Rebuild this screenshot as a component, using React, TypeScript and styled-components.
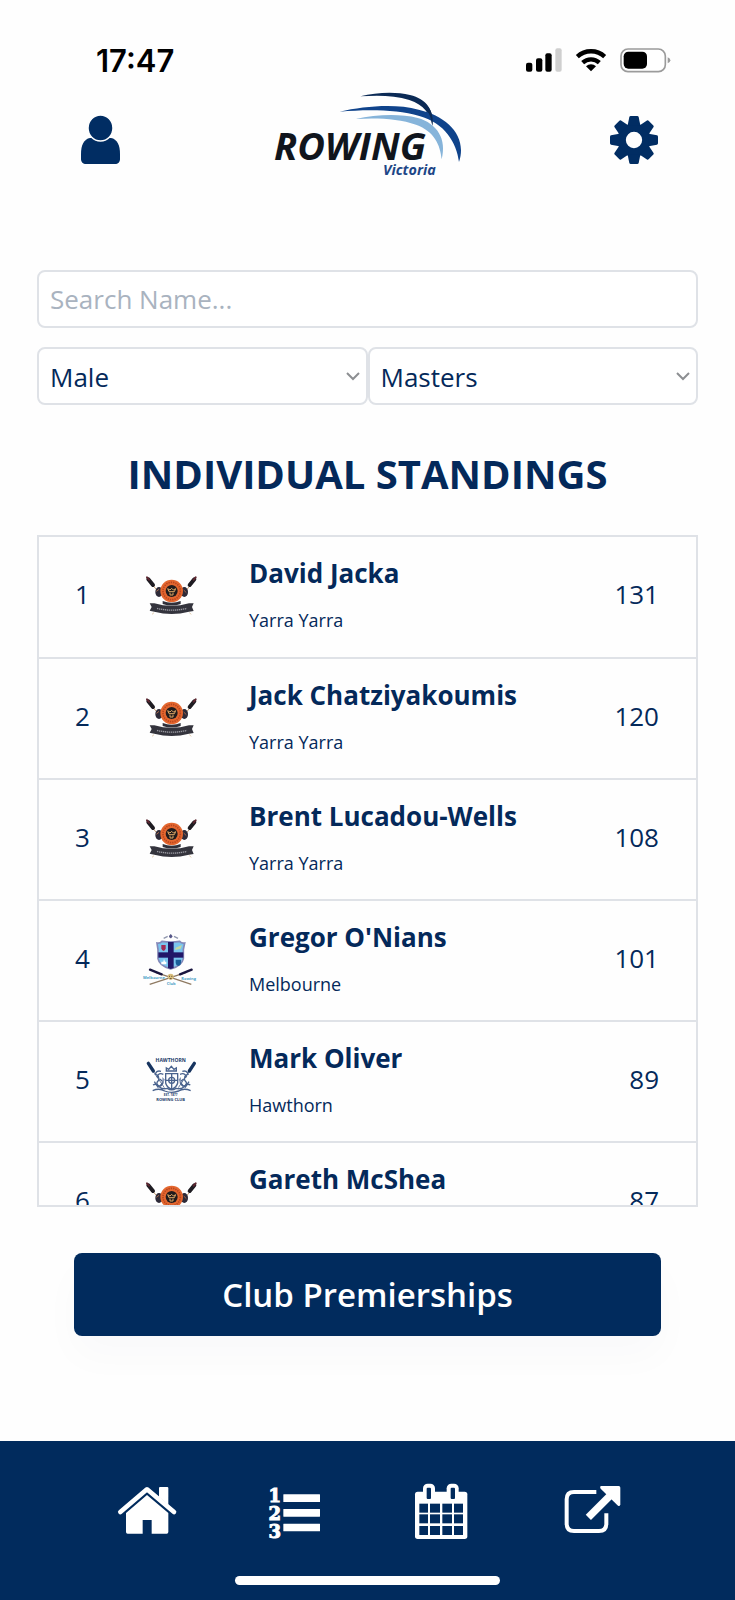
import React, { useState } from "react"
import styled, { createGlobalStyle } from "styled-components"

const navy = "#012b5d"
const textColor = "#04295a"
const borderColor = "#dfe2e7"

const GlobalStyle = createGlobalStyle`
    * {
        box-sizing: border-box;
    }

    body {
        margin: 0;
        background: #fefefe;
        color: ${textColor};
        font-family: "Open Sans", "Noto Sans", sans-serif;
    }
`

const Page = styled.div`
    display: flex;
    flex-direction: column;
    min-height: 100vh;
`

const StatusBar = styled.div`
    display: flex;
    align-items: center;
    justify-content: space-between;
    height: 90px;
    padding: 30px 64px 0 96px;
    color: #000;
`

const Clock = styled.time`
    font-family: Inter, sans-serif;
    font-size: 31px;
    font-weight: 600;
`

const StatusIcons = styled.div`
    display: flex;
    align-items: center;
    gap: 13px;
`

const Header = styled.header`
    display: flex;
    align-items: center;
    justify-content: space-between;
    height: 100px;
    padding: 0 76px;
`

const IconButton = styled.button`
    display: flex;
    padding: 0;
    border: none;
    background: none;
    color: #012d63;
    cursor: pointer;
`

const Main = styled.main`
    display: flex;
    flex-direction: column;
    padding: 80px 37px 0;
`

const SearchInput = styled.input`
    width: 100%;
    height: 58px;
    padding: 0 11px;
    border: 2px solid ${borderColor};
    border-radius: 8px;
    background: #fff;
    color: ${textColor};
    font: inherit;
    font-size: 26px;

    &::placeholder {
        color: #a9b3bf;
        opacity: 1;
    }
`

const Filters = styled.div`
    display: flex;
    margin-top: 19px;
`

const SelectWrapper = styled.div`
    position: relative;
    flex: 1;
`

const Select = styled.select`
    width: 100%;
    height: 58px;
    padding: 2px 40px 0 11px;
    border: 2px solid ${borderColor};
    border-radius: 8px;
    background: #fff;
    color: ${textColor};
    font: inherit;
    font-size: 26px;
    appearance: none;
`

const Chevron = styled.svg`
    position: absolute;
    top: 24px;
    right: 8px;
    pointer-events: none;
`

const Title = styled.h1`
    margin: 41px 0 33px;
    font-size: 40px;
    line-height: 56px;
    font-weight: 700;
    text-align: center;
`

const Standings = styled.div`
    height: 42vh;
    overflow-y: auto;
    border: 2px solid ${borderColor};
    scrollbar-width: none;
`

const Table = styled.table`
    width: 100%;
    border-collapse: collapse;
    table-layout: fixed;
`

const Row = styled.tr`
    height: 121px;
    border-bottom: 2px solid ${borderColor};
`

const Cell = styled.td<{ $width?: number; $align?: string }>`
    width: ${(props) => (props.$width ? `${props.$width}px` : "auto")};
    padding: 0 0 6px;
    font-size: 26px;
    text-align: ${(props) => props.$align || "left"};
    vertical-align: middle;
`

const ScoreCell = styled(Cell)`
    padding-right: 37px;
`

const AthleteCell = styled(Cell)`
    padding-left: 32px;
`

const AthleteName = styled.div`
    font-size: 26px;
    line-height: 36px;
    font-weight: 700;
    white-space: nowrap;
`

const ClubName = styled.div`
    margin-top: 16px;
    font-size: 18px;
    line-height: 26px;
`

const CrestBox = styled.svg`
    display: block;
    margin: 0 auto;
`

const PrimaryButton = styled.button`
    height: 83px;
    margin: 46px 37px 60px;
    border: none;
    border-radius: 8px;
    background: ${navy};
    box-shadow: 0 20px 40px rgba(1, 43, 93, 0.025);
    color: #fff;
    font: inherit;
    font-size: 33px;
    font-weight: 600;
    cursor: pointer;
`

const TabBar = styled.footer`
    margin-top: auto;
    padding: 38px 0 15px;
    background: ${navy};
`

const TabNav = styled.nav`
    display: grid;
    grid-template-columns: repeat(4, 1fr);
    padding: 0 70px 0 74px;
`

const TabLink = styled.a`
    display: flex;
    justify-content: center;
    color: #fff;
`

const HomeIndicator = styled.div`
    width: 36%;
    height: 9px;
    margin: 33px auto 0;
    border-radius: 5px;
    background: #fff;
`

const SignalIcon = () => (
    <svg width="36" height="24" viewBox="81 53 108 72" aria-hidden="true">
        <rect x="81" y="97" width="19" height="27" rx="6" />
        <rect x="111" y="84" width="19" height="40" rx="6" />
        <rect x="139" y="69" width="19" height="55" rx="6" />
        <rect x="169" y="54" width="19" height="70" rx="6" fill="#cfcfcf" />
    </svg>
)

const WifiIcon = () => (
    <svg width="32" height="24" viewBox="226 53 96 72" fill="none" stroke="#000" strokeWidth="13" aria-hidden="true">
        <path d="M233 79a60 60 0 0 1 82 0" />
        <path d="M249 97a37 37 0 0 1 50 0" />
        <path d="M274 123l-15-15a22 22 0 0 1 30 0z" fill="#000" stroke="none" />
    </svg>
)

const BatteryIcon = () => (
    <svg width="51" height="25" viewBox="360 52 153 75" aria-hidden="true">
        <rect x="363" y="55" width="133" height="68" rx="21" fill="#fff" stroke="#9b9b9b" strokeWidth="5" />
        <rect x="371" y="63" width="70" height="51" rx="14" />
        <path d="M503 80q8 3 8 9t-8 9z" fill="#9b9b9b" />
    </svg>
)

const PersonIcon = () => (
    <svg width="50" height="50" viewBox="76 115 50 50" fill="currentColor" aria-hidden="true">
        <path d="M90 138c-6 1-9 7-9 16v5c0 3 2 5 5 5h29c3 0 5-2 5-5v-5c0-9-3-15-9-16z" />
        <ellipse cx="100.500" cy="128" rx="12.500" ry="13" stroke="#fefefe" strokeWidth="1.500" />
    </svg>
)

const GearIcon = () => (
    <svg width="50" height="50" viewBox="328 255 150 150" aria-hidden="true">
        <circle cx="403" cy="330" r="37" fill="none" stroke="currentColor" strokeWidth="25" />
        {[0, 45, 90, 135, 180, 225, 270, 315].map((angle) => (
            <path
                key={angle}
                d="M384 286l5-25q1-3 4-3h20q3 0 4 3l5 25z"
                fill="currentColor"
                transform={`rotate(${angle} 403 330)`}
            />
        ))}
    </svg>
)

const Logo = () => (
    <svg width="190" height="100" viewBox="40 30 570 300" role="img" aria-label="Rowing Victoria">
        <path d="M302 49C350 37 407 34 451 45c49 12 73 45 67 92-5-34-25-62-69-77-43-14-94-15-147-11z" fill="#0b2a55" />
        <path d="M288 117c61-13 129-17 186-3 59 16 88 64 72 124-4-43-22-84-77-104-51-18-116-21-181-17z" fill="#86b4da" />
        <path d="M240 95c73-16 165-25 237-6 86 20 147 79 121 157-7-57-42-117-119-138-68-20-157-20-239-13z" fill="#0f438b" />
        <path d="M485 63c25 14 39 42 33 74-2-18-8-36-20-52z" fill="#0b2a55" />
        <text x="43" y="239" fontSize="114" fontStyle="italic" fontWeight="700" fill="#10151d">
            ROWING
        </text>
        <text x="370" y="284" fontSize="43" fontStyle="italic" fontWeight="700" fill="#1d4687">
            Victoria
        </text>
    </svg>
)

const YarraCrest = () => (
    <CrestBox width="60" height="60" viewBox="35 14 180 180" aria-hidden="true">
        <g stroke="#c79b6d" strokeWidth="3">
            <path d="M62 72l34 38M186 72l-34 38" />
        </g>
        <g stroke="#1e1c22" strokeWidth="12" strokeLinecap="round">
            <path d="M54 60l14 17M192 60l-14 17" />
        </g>
        <path d="M50 54l6 7M196 54l-6 7" stroke="#5d2630" strokeWidth="6" strokeLinecap="round" />
        <ellipse cx="86" cy="98" rx="11" ry="15" fill="#2d2a38" />
        <ellipse cx="162" cy="98" rx="11" ry="15" fill="#2d2a38" />
        <path d="M78 96l8-6M160 92l8 8" stroke="#a5684b" strokeWidth="3" />
        <circle cx="124" cy="95" r="34" fill="#e4672f" />
        <circle cx="124" cy="95" r="26" fill="none" stroke="#b8451f" strokeWidth="5" strokeDasharray="4 3" />
        <circle cx="124" cy="95" r="18" fill="#211b1c" />
        <path d="M112 88l7 4 5-5 5 5 7-4-4 9h-16zM119 100v7h9v-7" fill="none" stroke="#dca765" strokeWidth="3" />
        <path d="M97 125q27 11 54 0v9q-27 9-54 0z" fill="#30303a" />
        <path d="M58 132l14 0q52 15 104 0l14 0-5 11 5 12-14 2q-52 14-104 0l-14-3 6-11z" fill="#34343d" />
        <path d="M80 147q44 11 90 0" fill="none" stroke="#9a9aa2" strokeWidth="4" strokeDasharray="4 2" />
        <path d="M71 160l-6 5M177 160l6 5" stroke="#d4b487" strokeWidth="2" />
    </CrestBox>
)

const MelbourneCrest = () => (
    <CrestBox width="60" height="60" viewBox="35 24 180 180" aria-hidden="true">
        <path d="M100 55l12-6M143 55l-12-6M121 42v13" stroke="#8f96ad" strokeWidth="4" />
        <circle cx="121" cy="49" r="5" fill="#565588" />
        <path
            d="M80 69q9 2 15-5 27 4 53 0 6 7 15 5l-4 20v27q-4 22-38 31-34-9-38-31V89z"
            fill="#7ac4ee"
            stroke="#8388b8"
            strokeWidth="5"
        />
        <path d="M113 66h17v78l-9 3-8-3z" fill="#211768" />
        <path d="M84 97h75v16H84z" fill="#211768" />
        <path d="M93 75h13v10q-1 6-6 8-6-2-7-8z" fill="#a12c55" />
        <path d="M136 83l19-8-4 11-17 4z" fill="#c3d8a1" />
        <path d="M101 116l3 9h4v8H93v-8h6z" fill="#fff" />
        <path d="M136 119h16v10q-1 7-8 9-7-2-8-9z" fill="#1a5d99" />
        <path d="M76 157l107 36M168 157L58 193" stroke="#8f7a62" strokeWidth="4" />
        <path d="M59 149l35 14M184 149l-35 14" stroke="#19153f" strokeWidth="7" strokeLinecap="round" />
        <circle cx="121" cy="170" r="9" fill="#d8be7c" />
        <path d="M116 169h3M123 169h3M118 176h6" stroke="#5e4932" strokeWidth="3" />
        <g fontSize="12" fontWeight="700" fill="#4aa1c7">
            <text x="38" y="177">Melbourne</text>
            <text x="153" y="179">Rowing</text>
            <text x="109" y="196">Club</text>
        </g>
    </CrestBox>
)

const HawthornCrest = () => (
    <CrestBox width="60" height="60" viewBox="35 14 180 180" aria-hidden="true">
        <g stroke="#6e7fa1" strokeWidth="3">
            <path d="M64 74l38 56M182 74l-38 56" />
        </g>
        <path d="M54 57l15 23M192 57l-15 23" stroke="#17345f" strokeWidth="10" strokeLinecap="round" />
        <g fill="none" stroke="#4a638e" strokeWidth="4">
            <path d="M108 80v-9l7 4 8-9 8 9 7-4v9z" />
            <path d="M106 88h36v28q-3 13-18 19-15-6-18-19z" />
            <path d="M124 88v46M106 108h36" />
            <path d="M99 90q-14-6-19 7 10 5 3 13-8 8 3 16 8-2 13-12M149 90q14-6 19 7-10 5-3 13 8 8-3 16-8-2-13-12" />
            <path d="M92 81q-14-4-17 9 9 1 10 10M156 81q14-4 17 9-9 1-10 10" />
            <path d="M88 104l10 8-8 14M160 104l-10 8 8 14M72 112l12 18M176 112l-12 18" />
            <path d="M68 122q11-6 18 5 12 9 25 5 13 9 26 0 13 4 25-5 7-11 18-5M67 139q20-9 36 1 20 8 42 0 16-10 36-1" />
            <circle cx="124" cy="108" r="9" />
        </g>
        <path d="M96 98l8 8-8 10zM152 98l-8 8 8 10z" fill="#8696b5" />
        <g fill="#203a69" fontWeight="700" textAnchor="middle">
            <text x="121" y="54" fontSize="15">HAWTHORN</text>
            <text x="121" y="156" fontSize="9">EST. 1877</text>
            <text x="121" y="170" fontSize="12">ROWING CLUB</text>
        </g>
    </CrestBox>
)

const HomeIcon = () => (
    <svg width="64" height="64" viewBox="78 57 192 192" fill="currentColor" aria-hidden="true">
        <path d="M207 84q0-3 3-3h22q3 0 3 3v51l-28-24z" />
        <path
            d="M91 156l80-68 81 68"
            fill="none"
            stroke="currentColor"
            strokeWidth="14"
            strokeLinejoin="round"
            strokeLinecap="round"
        />
        <path d="M171 105l64 54v57q0 5-5 5h-45v-41h-27v41h-45q-5 0-5-5v-57z" />
    </svg>
)

const RankingIcon = () => (
    <svg width="64" height="64" viewBox="522 57 192 192" fill="currentColor" aria-hidden="true">
        <rect x="580" y="103" width="110" height="23" rx="1" />
        <rect x="580" y="147" width="110" height="23" rx="1" />
        <rect x="580" y="191" width="110" height="23" rx="1" />
        <g
            fontFamily="'DejaVu Serif', serif"
            fontWeight="700"
            fontSize="54"
            textAnchor="middle"
            stroke="currentColor"
            strokeWidth="3"
        >
            <text x="554" y="125">1</text>
            <text x="554" y="180">2</text>
            <text x="554" y="235">3</text>
        </g>
    </svg>
)

const CalendarIcon = () => (
    <svg width="64" height="64" viewBox="122 57 192 192" fill="currentColor" aria-hidden="true">
        <rect x="134" y="95" width="157" height="142" rx="8" />
        <rect x="158" y="71" width="36" height="50" rx="14" />
        <rect x="229" y="71" width="36" height="50" rx="14" />
        <g fill={navy}>
            <rect x="169" y="83" width="13" height="34" rx="3" />
            <rect x="241" y="83" width="13" height="34" rx="3" />
            {[131, 163, 198].map((y) => (
                <React.Fragment key={y}>
                    <rect x="147" y={y} width="26" height="27" />
                    <rect x="179" y={y} width="30" height="27" />
                    <rect x="216" y={y} width="29" height="27" />
                    <rect x="251" y={y} width="27" height="27" />
                </React.Fragment>
            ))}
        </g>
    </svg>
)

const ExternalIcon = () => (
    <svg width="64" height="64" viewBox="569 57 192 192" aria-hidden="true">
        <g fill="none" stroke="currentColor">
            <path d="M681 96h-67q-22 0-22 22v73q0 22 22 22h75q22 0 22-22v-31" strokeWidth="12" />
            <path d="M657 172l66-66" strokeWidth="22" />
        </g>
        <path
            d="M696 78h52q5 0 5 5v50q-1 8-7 4l-52-51q-4-7 2-8z"
            fill="currentColor"
        />
    </svg>
)

const crests = {
    "Yarra Yarra": YarraCrest,
    Melbourne: MelbourneCrest,
    Hawthorn: HawthornCrest,
}

type Club = keyof typeof crests

interface Athlete {
    name: string
    club: Club
    points: number
}

const athletes: Athlete[] = [
    { name: "David Jacka", club: "Yarra Yarra", points: 131 },
    { name: "Jack Chatziyakoumis", club: "Yarra Yarra", points: 120 },
    { name: "Brent Lucadou-Wells", club: "Yarra Yarra", points: 108 },
    { name: "Gregor O'Nians", club: "Melbourne", points: 101 },
    { name: "Mark Oliver", club: "Hawthorn", points: 89 },
    { name: "Gareth McShea", club: "Yarra Yarra", points: 87 },
]

const tabs = [
    { label: "Home", href: "#home", Icon: HomeIcon },
    { label: "Standings", href: "#standings", Icon: RankingIcon },
    { label: "Calendar", href: "#calendar", Icon: CalendarIcon },
    { label: "Website", href: "#website", Icon: ExternalIcon },
]

interface FilterProps {
    label: string
    options: string[]
}

const Filter: React.FC<FilterProps> = ({ label, options }) => (
    <SelectWrapper>
        <Select aria-label={label} defaultValue={options[0]}>
            {options.map((option) => (
                <option key={option}>{option}</option>
            ))}
        </Select>
        <Chevron width="14" height="10" viewBox="0 0 14 10" fill="none" stroke="#8d8f92" strokeWidth="2">
            <path d="M1 2l6 6 6-6" />
        </Chevron>
    </SelectWrapper>
)

const App: React.FC = () => {
    const [search, setSearch] = useState("")

    const isVisible = (athlete: Athlete) => athlete.name.toLowerCase().includes(search.toLowerCase())

    return (
        <Page>
            <GlobalStyle />
            <StatusBar>
                <Clock>17:47</Clock>
                <StatusIcons>
                    <SignalIcon />
                    <WifiIcon />
                    <BatteryIcon />
                </StatusIcons>
            </StatusBar>

            <Header>
                <IconButton aria-label="Profile">
                    <PersonIcon />
                </IconButton>
                <Logo />
                <IconButton aria-label="Settings">
                    <GearIcon />
                </IconButton>
            </Header>

            <Main>
                <SearchInput
                    aria-label="Search Name"
                    placeholder="Search Name..."
                    value={search}
                    onChange={(e) => setSearch(e.target.value)}
                />
                <Filters>
                    <Filter label="Gender" options={["Male", "Female"]} />
                    <Filter label="Category" options={["Masters", "Open"]} />
                </Filters>

                <Title>INDIVIDUAL STANDINGS</Title>

                <Standings>
                    <Table>
                        <tbody>
                            {athletes.filter(isVisible).map((athlete) => {
                                const Crest = crests[athlete.club]

                                return (
                                    <Row key={athlete.name}>
                                        <Cell $width={87} $align="center">
                                            {athletes.indexOf(athlete) + 1}
                                        </Cell>
                                        <Cell $width={91}>
                                            <Crest />
                                        </Cell>
                                        <AthleteCell>
                                            <AthleteName>{athlete.name}</AthleteName>
                                            <ClubName>{athlete.club}</ClubName>
                                        </AthleteCell>
                                        <ScoreCell $width={120} $align="right">
                                            {athlete.points}
                                        </ScoreCell>
                                    </Row>
                                )
                            })}
                        </tbody>
                    </Table>
                </Standings>

                <PrimaryButton>Club Premierships</PrimaryButton>
            </Main>

            <TabBar>
                <TabNav>
                    {tabs.map(({ label, href, Icon }) => (
                        <TabLink key={label} href={href} aria-label={label}>
                            <Icon />
                        </TabLink>
                    ))}
                </TabNav>
                <HomeIndicator />
            </TabBar>
        </Page>
    )
}

export default App
